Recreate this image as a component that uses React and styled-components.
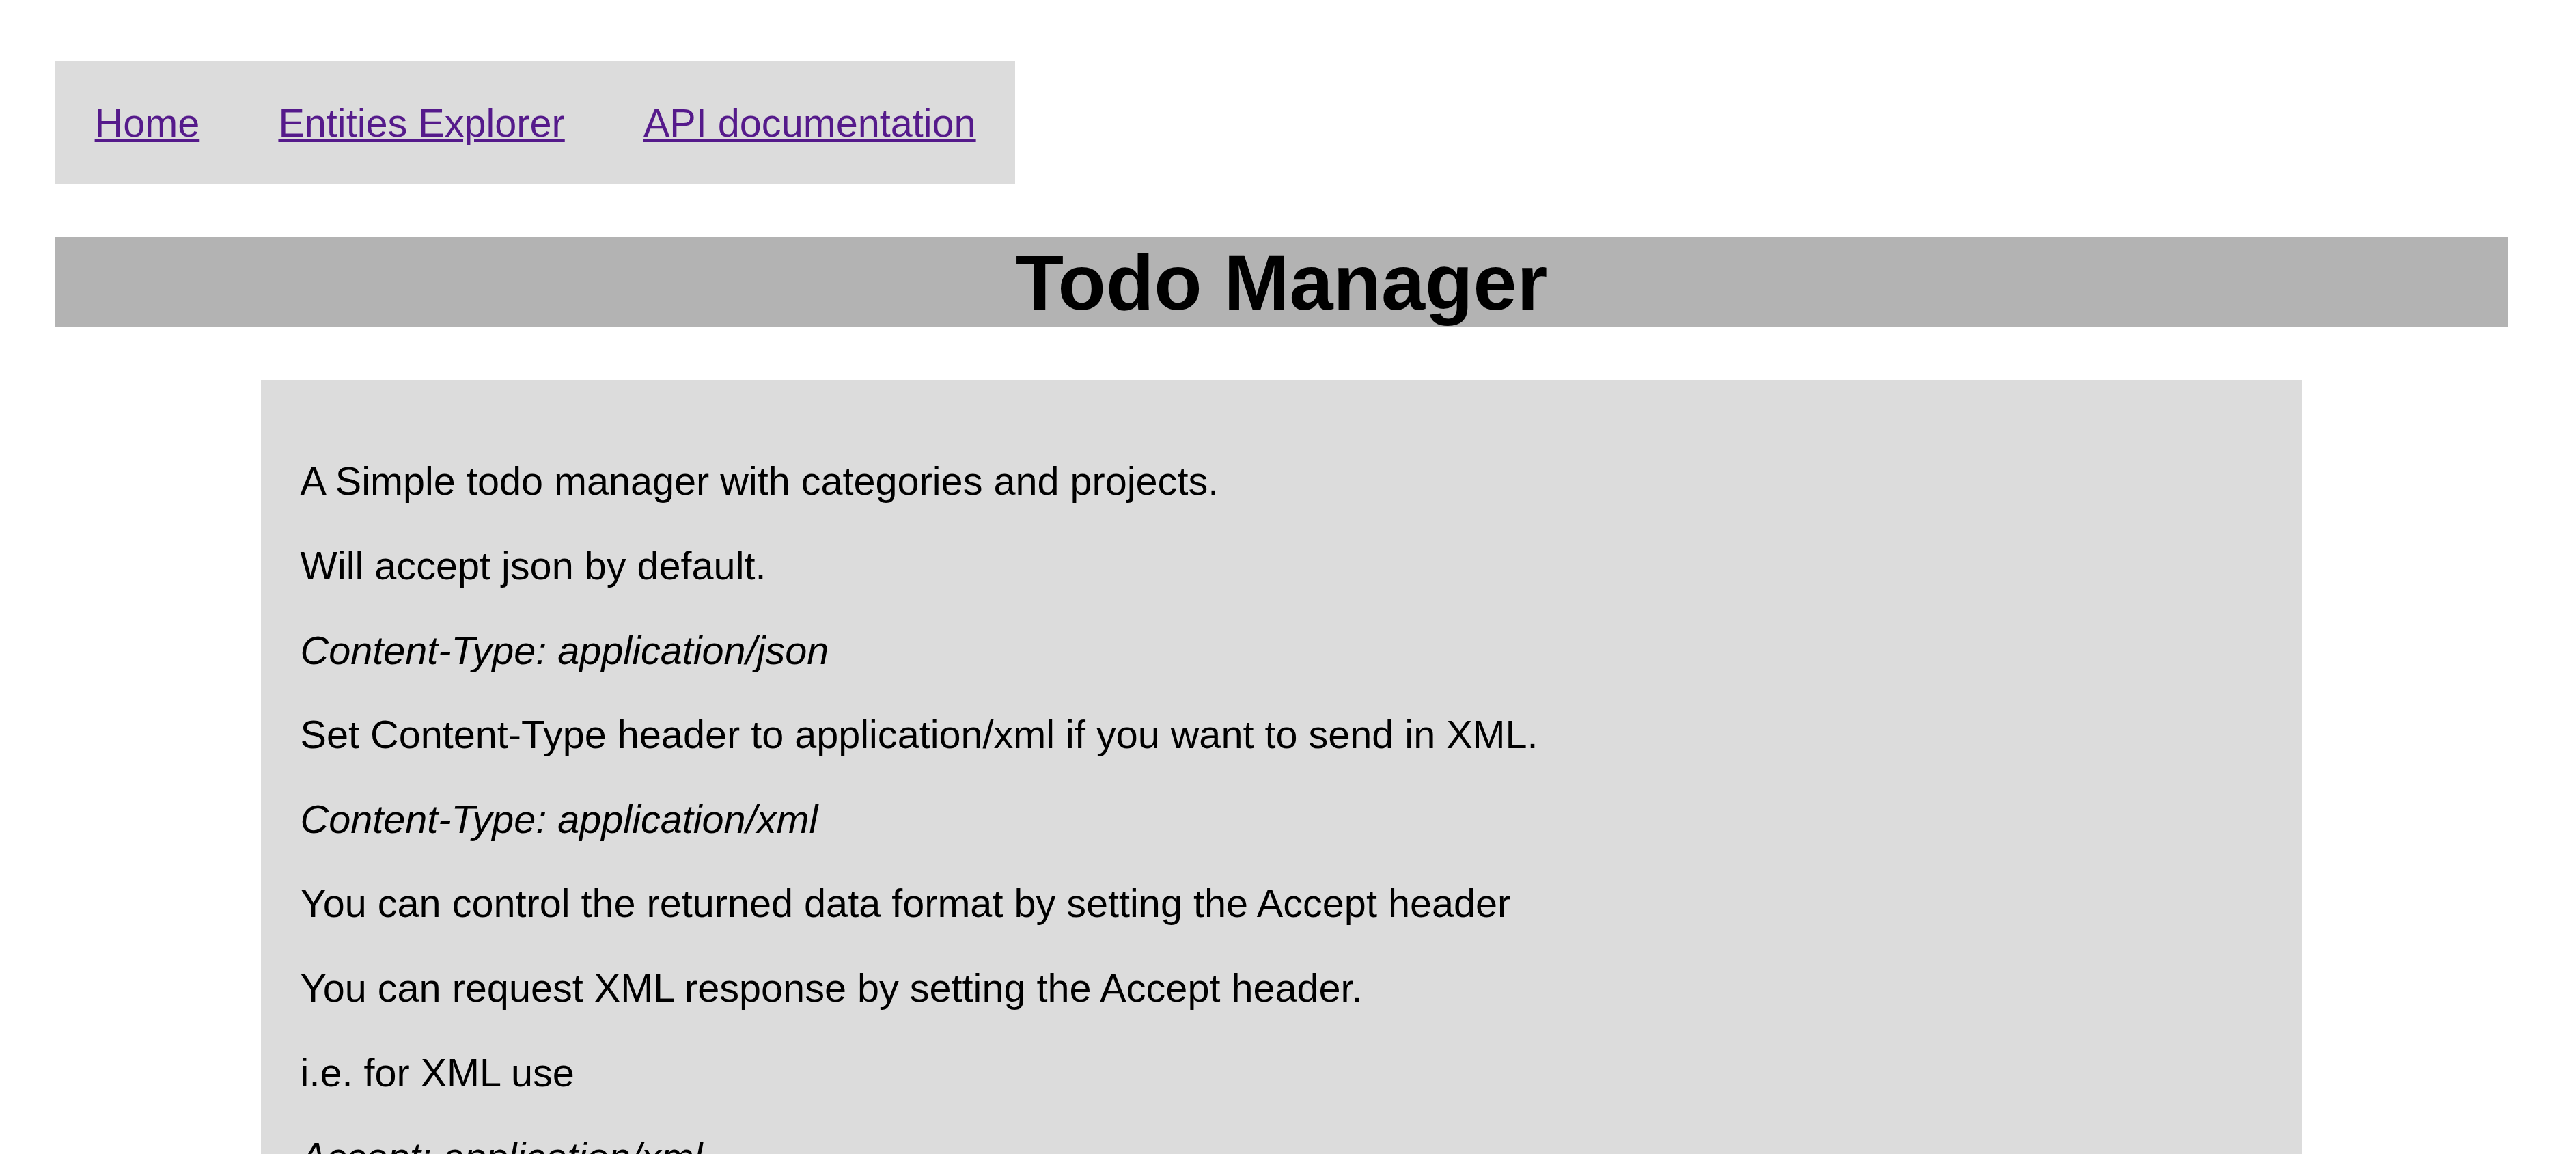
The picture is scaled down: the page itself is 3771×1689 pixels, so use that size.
import React from "react";
import styled, { createGlobalStyle } from "styled-components";

const GlobalStyle = createGlobalStyle`
    html, body {
        margin: 0;
        padding: 0;
        background: #fff;
    }
    body {
        font-family: "Liberation Sans", Arial, sans-serif;
        font-size: 57.6px;
        color: #000;
    }
`;

const Page = styled.div`
    padding: 89px 100px 0 81px;
`;

const NavBar = styled.nav`
    display: flex;
    width: max-content;
    padding: 57.6px 0;
    background: #dcdcdc;
`;

const NavLink = styled.a`
    padding: 0 57.6px;
    color: #551a8b;
    text-decoration: underline;
    cursor: pointer;
`;

const TitleBar = styled.h1`
    margin: 77px 0;
    background: #b3b3b3;
    font-size: 115.2px;
    font-weight: bold;
    text-align: center;
`;

const Description = styled.section`
    margin: 0 301px;
    padding: 57.6px;
    background: #dcdcdc;
`;

const Para = styled.p`
    margin: 57.6px 0;
    font-style: ${(p) => (p.$code ? "italic" : "normal")};
`;

const lines = [
    { text: "A Simple todo manager with categories and projects." },
    { text: "Will accept json by default." },
    { text: "Content-Type: application/json", code: true },
    { text: "Set Content-Type header to application/xml if you want to send in XML." },
    { text: "Content-Type: application/xml", code: true },
    { text: "You can control the returned data format by setting the Accept header" },
    { text: "You can request XML response by setting the Accept header." },
    { text: "i.e. for XML use" },
    { text: "Accept: application/xml", code: true },
    { text: "You can request JSON response by setting the Accept header." },
    { text: "i.e. for JSON use" },
    { text: "Accept: application/json", code: true },
];

const App = () => (
    <>
        <GlobalStyle />
        <Page>
            <NavBar>
                <NavLink href="#">Home</NavLink>
                <NavLink href="#">Entities Explorer</NavLink>
                <NavLink href="#">API documentation</NavLink>
            </NavBar>
            <TitleBar>Todo Manager</TitleBar>
            <Description>
                {lines.map((l, i) => (
                    <Para key={i} $code={l.code}>{l.text}</Para>
                ))}
            </Description>
        </Page>
    </>
);

export default App;
